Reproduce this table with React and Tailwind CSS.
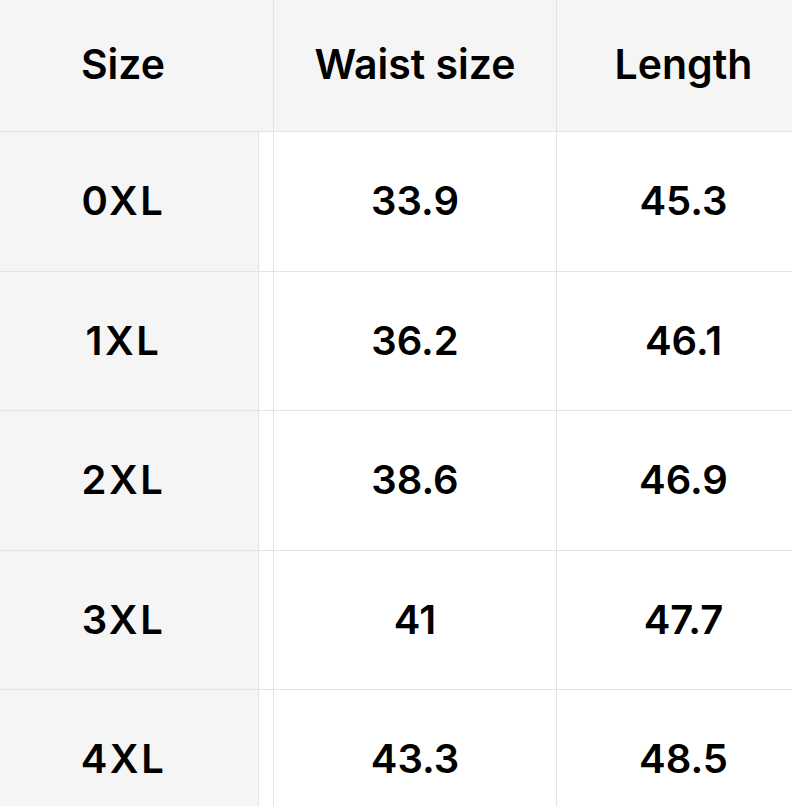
const rows = [
  ["0XL", "33.9", "45.3"],
  ["1XL", "36.2", "46.1"],
  ["2XL", "38.6", "46.9"],
  ["3XL", "41", "47.7"],
  ["4XL", "43.3", "48.5"],
];

export default function App() {
  return (
    <div
      className="w-[792px] h-[806px] overflow-hidden bg-white text-black"
      style={{ fontFamily: "Inter, 'Liberation Sans', sans-serif" }}
    >
      <div className="w-[810px]">
        {/* header */}
        <div className="flex h-[132px] bg-[#f5f5f5] border-b border-[#e4e4e4] text-[41px] font-semibold">
          <div className="w-[274px] shrink-0 flex items-center justify-center pr-[27px] pb-[2px] border-r border-[#e4e4e4]">
            Size
          </div>
          <div className="w-[283px] shrink-0 flex items-center justify-center pb-[2px] border-r border-[#e4e4e4]">
            Waist size
          </div>
          <div className="flex-1 flex items-center justify-center pb-[2px]">Length</div>
        </div>

        {/* body */}
        {rows.map((r, i) => (
          <div
            key={i}
            className="flex h-[139.5px] border-b border-[#e4e4e4] text-[40px] font-semibold"
          >
            <div className="w-[259px] shrink-0 flex items-center justify-center pr-[11px] bg-[#f5f5f5] border-r border-[#e4e4e4] tracking-[2.5px]">
              {r[0]}
            </div>
            <div className="w-[15px] shrink-0 border-r border-[#e4e4e4]" />
            <div className="w-[283px] shrink-0 flex items-center justify-center border-r border-[#e4e4e4]">
              {r[1]}
            </div>
            <div className="flex-1 flex items-center justify-center">{r[2]}</div>
          </div>
        ))}
      </div>
    </div>
  );
}
